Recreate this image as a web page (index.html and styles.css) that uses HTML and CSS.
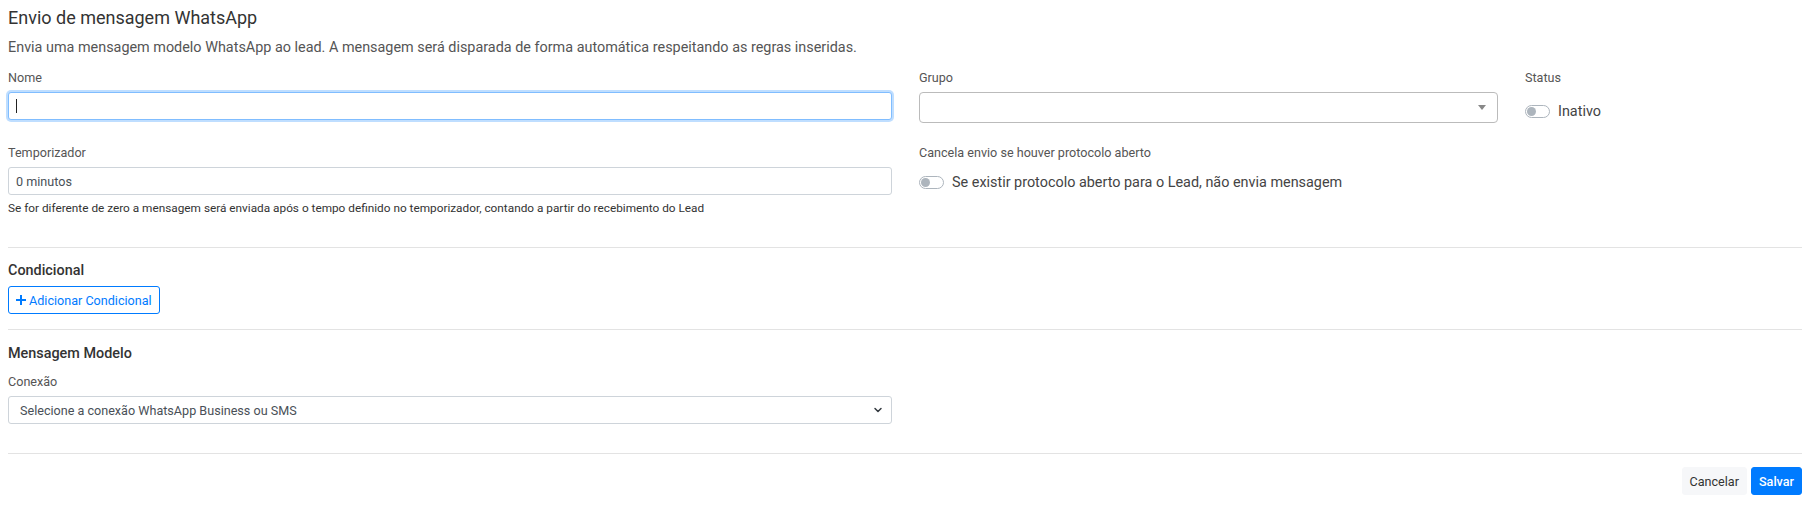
FILE: index.html
```html
<!DOCTYPE html>
<html lang="pt-BR">
<head>
<meta charset="utf-8">
<title>Envio de mensagem WhatsApp</title>
<link rel="stylesheet" href="styles.css">
</head>
<body>
<div class="page">
  <h5 class="title">Envio de mensagem WhatsApp</h5>
  <p class="desc">Envia uma mensagem modelo WhatsApp ao lead. A mensagem será disparada de forma automática respeitando as regras inseridas.</p>

  <div class="row">
    <div class="col col-a">
      <label class="label">Nome</label>
      <div class="control focus"><span class="caret"></span></div>
    </div>
    <div class="col col-b">
      <label class="label">Grupo</label>
      <div class="select2">
        <span class="tri"></span>
      </div>
    </div>
    <div class="col col-c">
      <label class="label">Status</label>
      <div class="switch-line status-switch">
        <span class="switch"><span class="knob"></span></span>
        <span class="switch-text">Inativo</span>
      </div>
    </div>
  </div>

  <div class="row row2">
    <div class="col col-a">
      <label class="label">Temporizador</label>
      <div class="control"><span class="value">0 minutos</span></div>
      <small class="help">Se for diferente de zero a mensagem será enviada após o tempo definido no temporizador, contando a partir do recebimento do Lead</small>
    </div>
    <div class="col col-b">
      <label class="label">Cancela envio se houver protocolo aberto</label>
      <div class="switch-line cancel-switch">
        <span class="switch"><span class="knob"></span></span>
        <span class="switch-text">Se existir protocolo aberto para o Lead, não envia mensagem</span>
      </div>
    </div>
    <div class="col col-c"></div>
  </div>

  <hr class="sep sep1">

  <h6 class="section sec-cond">Condicional</h6>
  <button class="btn-outline" type="button"><svg class="plus" viewBox="0 0 10 10" width="10" height="10"><path d="M4 0h2v4h4v2H6v4H4V6H0V4h4z" fill="#007bff"/></svg>Adicionar Condicional</button>

  <hr class="sep sep2">

  <h6 class="section">Mensagem Modelo</h6>
  <label class="label">Conexão</label>
  <div class="control select-native">
    <span class="value">Selecione a conexão WhatsApp Business ou SMS</span>
    <svg class="chev" viewBox="0 0 16 16" width="10" height="8"><path d="M2 5l6 6 6-6" fill="none" stroke="#343a40" stroke-width="3" stroke-linecap="round" stroke-linejoin="round"/></svg>
  </div>

  <hr class="sep sep3">

  <div class="footer">
    <button class="btn btn-light" type="button">Cancelar</button>
    <button class="btn btn-primary" type="button">Salvar</button>
  </div>
</div>
</body>
</html>
```

FILE: styles.css
```css
* { box-sizing: border-box; }
html, body { margin: 0; padding: 0; background: #fff; }
body {
  font-family: Roboto, "Liberation Sans", Arial, sans-serif;
  color: #212529;
  font-size: 14px;
}
.page {
  padding: 7px 12px 0 8px;
}
.title {
  margin: 0;
  font-size: 18px;
  line-height: 22px;
  font-weight: 400;
  color: #333;
}
.desc {
  margin: 8px 0 0;
  font-size: 14.4px;
  line-height: 21px;
  color: #555;
}
.row {
  display: flex;
  gap: 27px;
  margin-top: 10px;
}
.row2 { margin-top: 20px; }
.col { display: flex; flex-direction: column; }
.col-a { width: 884px; }
.col-b { width: 579px; }
.col-c { flex: 1; }
.label {
  display: block;
  font-size: 12.6px;
  line-height: 19px;
  color: #555;
  margin-bottom: 5px;
}
.control {
  height: 28px;
  border: 1px solid #ced4da;
  border-radius: 3px;
  padding: 0 7px;
  display: flex;
  align-items: center;
  font-size: 12.6px;
  color: #495057;
  background: #fff;
}
.control.focus {
  border-color: #80bdff;
  box-shadow: 0 0 0 2px rgba(0, 123, 255, 0.25);
}
.caret {
  display: inline-block;
  width: 1px;
  height: 14px;
  background: #222;
}
.select2 {
  height: 31px;
  border: 1px solid #bbb;
  border-radius: 4px;
  display: flex;
  align-items: center;
  justify-content: flex-end;
  padding-right: 11px;
}
.tri {
  width: 0;
  height: 0;
  border-left: 4px solid transparent;
  border-right: 4px solid transparent;
  border-top: 5px solid #888;
}
.switch-line {
  display: flex;
  align-items: center;
  gap: 8px;
  font-size: 14.4px;
  color: #444;
  line-height: 21px;
}
.status-switch { margin-top: 9px; }
.cancel-switch { margin-top: 5px; }
.switch {
  position: relative;
  display: inline-block;
  width: 25px;
  height: 13px;
  border: 1px solid #adb5bd;
  border-radius: 7px;
  background: #fff;
}
.knob {
  position: absolute;
  left: 1px;
  top: 1px;
  width: 9px;
  height: 9px;
  border-radius: 50%;
  background: #adb5bd;
}
.help {
  display: block;
  margin-top: 5px;
  font-size: 11.8px;
  line-height: 17px;
  color: #333;
}
.sep {
  border: 0;
  border-top: 1px solid #e3e3e3;
  margin: 0;
}
.sep1 { margin-top: 30px; }
.sep2 { margin-top: 15px; }
.sep3 { margin-top: 29px; }
.section {
  margin: 15px 0 0;
  font-size: 14.4px;
  line-height: 17px;
  font-weight: 500;
  color: #333;
}
.sec-cond { margin-top: 14px; }
.btn-outline {
  margin-top: 7px;
  display: inline-flex;
  align-items: center;
  gap: 3px;
  height: 28px;
  padding: 0 7px;
  border: 1px solid #007bff;
  border-radius: 3px;
  background: #fff;
  color: #007bff;
  font-family: inherit;
  font-size: 12.6px;
}
.plus { display: block; }
.section + .label { margin-top: 10px; }
.select-native {
  width: 884px;
  justify-content: space-between;
  padding: 0 8px 0 11px;
}
.chev { display: block; }
.footer {
  display: flex;
  justify-content: flex-end;
  gap: 4px;
  margin-top: 13px;
}
.btn {
  height: 28px;
  padding: 0 8px;
  border: 1px solid transparent;
  border-radius: 3px;
  font-family: inherit;
  font-size: 12.6px;
}
.btn-light { background: #f6f7f9; border-color: #f6f7f9; color: #333; padding: 0 7px; }
.btn-primary { background: #007bff; border-color: #007bff; color: #fff; padding: 0 7px; font-weight: 500; }
```
